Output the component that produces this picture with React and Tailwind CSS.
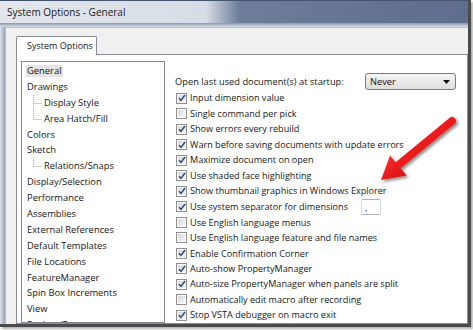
import React from "react";

const TREE = [
  { label: "General", selected: true },
  { label: "Drawings" },
  { label: "Display Style", child: true },
  { label: "Area Hatch/Fill", child: true, last: true },
  { label: "Colors" },
  { label: "Sketch" },
  { label: "Relations/Snaps", child: true, last: true },
  { label: "Display/Selection" },
  { label: "Performance" },
  { label: "Assemblies" },
  { label: "External References" },
  { label: "Default Templates" },
  { label: "File Locations" },
  { label: "FeatureManager" },
  { label: "Spin Box Increments" },
  { label: "View" },
  { label: "Backup/Recover" },
];

const OPTIONS = [
  ["Input dimension value", true],
  ["Single command per pick", false],
  ["Show errors every rebuild", true],
  ["Warn before saving documents with update errors", true],
  ["Maximize document on open", true],
  ["Use shaded face highlighting", true],
  ["Show thumbnail graphics in Windows Explorer", true],
  ["Use system separator for dimensions", true, "separator"],
  ["Use English language menus", false],
  ["Use English language feature and file names", false],
  ["Enable Confirmation Corner", true],
  ["Auto-show PropertyManager", true],
  ["Auto-size PropertyManager when panels are split", true],
  ["Automatically edit macro after recording", false],
  ["Stop VSTA debugger on macro exit", true],
];

function Connector({ last }) {
  return (
    <svg width="17" height="16" className="shrink-0 self-start">
      <line x1="6.5" y1="0" x2="6.5" y2={last ? 8.5 : 16} stroke="#a3a3a3" strokeDasharray="1 1" />
      <line x1="6.5" y1="8.5" x2="15" y2="8.5" stroke="#a3a3a3" strokeDasharray="1 1" />
    </svg>
  );
}

function Checkbox({ checked }) {
  return (
    <span className="w-[11px] h-[11px] shrink-0 border border-[#8e8f8f] bg-white p-px flex">
      <span className="flex-1 bg-gradient-to-br from-[#d8d8d8] to-[#f7f7f7] flex items-center justify-center">
        {checked && (
          <svg width="8" height="8" viewBox="0 0 8 8">
            <path d="M1 4.2 L3 6.4 L7 1" fill="none" stroke="#2f4a78" strokeWidth="1.5" />
          </svg>
        )}
      </span>
    </span>
  );
}

function RedArrow() {
  return (
    <svg width="110" height="100" viewBox="0 0 110 100" className="absolute left-[360px] top-[100px] pointer-events-none">
      <defs>
        <linearGradient id="redfill" x1="0" y1="0" x2="1" y2="1">
          <stop offset="0" stopColor="#ff3030" />
          <stop offset="1" stopColor="#d40b0b" />
        </linearGradient>
        <filter id="shadow" x="-20%" y="-20%" width="140%" height="140%">
          <feDropShadow dx="2" dy="2" stdDeviation="1.5" floodColor="#000" floodOpacity="0.45" />
        </filter>
      </defs>
      <g filter="url(#shadow)">
        <line x1="92" y1="21" x2="36" y2="67" stroke="url(#redfill)" strokeWidth="8" strokeLinecap="round" />
        <polygon points="21,80 30,55.5 46.5,75.5" fill="url(#redfill)" />
      </g>
    </svg>
  );
}

export default function App() {
  return (
    <div className="w-[473px] h-[330px] bg-white overflow-hidden font-['Open_Sans',sans-serif] text-[#161616]">
      <div className="relative w-[471px] h-[327px] border-r-[3px] border-b-[3px] border-[#4b4b4b] shadow-[2px_2px_2px_rgba(0,0,0,0.3)] flex flex-col overflow-hidden bg-[#c6cfdb]">
        {/* title bar */}
        <div className="h-[23px] shrink-0 border-t border-[#45546e] bg-[linear-gradient(90deg,#e2e6ec_0%,#d7dde6_44%,#6d7e9b_51%,#5d6e8e_100%)] flex items-center pl-[7px]">
          <span className="text-[10px] text-[#1a1a1a]">System Options - General</span>
        </div>
        <div className="h-[4px] shrink-0 bg-[linear-gradient(180deg,#8b97ad,#d9dee6)]" />

        <div className="flex-1 flex min-h-0">
          <div className="w-[5px] shrink-0 bg-[linear-gradient(90deg,#dfe4eb,#93a2b8)]" />
          <div className="flex-1 flex flex-col bg-[#f0f0f0] border-l border-t border-[#b3bdca] pl-[10px] pt-[8px] min-h-0">
            {/* tab */}
            <div className="relative z-10 -mb-px w-[81px] h-[19px] bg-white border border-b-0 border-[#898c95] rounded-t-[2px] flex items-center pl-[10px]">
              <span className="text-[9px] whitespace-nowrap">System Options</span>
            </div>

            {/* tab panel */}
            <div className="flex-1 flex bg-white border border-[#898c95] pl-[4px] pt-[6px] min-h-0 text-[9.4px]">
              {/* tree */}
              <div className="w-[144px] shrink-0 border border-[#828790] pt-px overflow-hidden">
                {TREE.map((item) => (
                  <div key={item.label} className="h-[15.9px] flex items-center pl-[5px] whitespace-nowrap">
                    {item.child && <Connector last={item.last} />}
                    <span className={item.selected ? "bg-[#e4e4e4] px-px -ml-px leading-[12px]" : "leading-[12px]"}>
                      {item.label}
                    </span>
                  </div>
                ))}
              </div>

              {/* options */}
              <div className="ml-[10px] pt-[12px] flex flex-col text-[9.1px]">
                <div className="h-[18px] flex items-center">
                  <span className="w-[190px] whitespace-nowrap text-[9.3px]">Open last used document(s) at startup:</span>
                  <span className="w-[91px] h-[17px] border border-[#7a7a7a] rounded-[3px] bg-gradient-to-b from-[#f4f4f4] to-[#dedede] flex items-center justify-between pl-[4px] pr-[5px] text-[9.3px]">
                    <span>Never</span>
                    <svg width="7" height="4" viewBox="0 0 7 4">
                      <polygon points="0,0 7,0 3.5,4" fill="#111" />
                    </svg>
                  </span>
                </div>
                {OPTIONS.map(([label, checked, extra]) => (
                  <div key={label} className="h-[15.9px] flex items-center whitespace-nowrap">
                    <span className="ml-px mr-[3px] flex">
                      <Checkbox checked={checked} />
                    </span>
                    {extra === "separator" ? (
                      <>
                        <span className="w-[171px]">{label}</span>
                        <span className="w-[20px] h-[16px] border border-[#abadb3] border-x-[#d5d7dd] rounded-[2px] bg-white flex items-end pl-[3px] pb-[2px] leading-none">
                          ,
                        </span>
                      </>
                    ) : (
                      <span>{label}</span>
                    )}
                  </div>
                ))}
              </div>
            </div>
          </div>
        </div>

        <RedArrow />
      </div>
    </div>
  );
}
